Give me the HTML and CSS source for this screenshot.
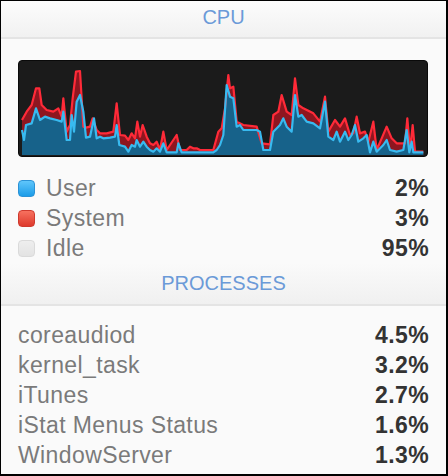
FILE: index.html
```html
<!DOCTYPE html>
<html lang="en">
    <head>
        <meta charset="UTF-8">
        <meta name="viewport" content="width=device-width, initial-scale=1.0">
        <title>CPU</title>
        <link rel="stylesheet" href="styles.css">
    </head>
    <body>
        <div class="panel">
            <div class="section-head head-cpu">CPU</div>
            <div class="section-body">
                <div class="chart">
                    <svg viewBox="57 18 1224 285" preserveAspectRatio="none">
                        <polygon class="sys-area" points="66,195 80,170 95,150 108,100 118,100 125,150 140,165 160,170 175,160 185,185 190,130 200,230 210,210 218,130 228,50 240,48 250,215 258,218 270,215 278,190 290,225 300,235 320,235 340,230 350,145 360,240 375,242 385,255 395,235 405,250 412,200 420,245 428,210 440,245 450,265 460,270 470,260 480,285 490,230 500,285 530,240 540,285 560,285 570,275 580,280 590,280 600,285 640,285 655,230 665,220 675,160 685,60 690,100 700,95 710,200 730,210 770,215 785,265 810,268 820,180 835,170 845,120 860,170 875,180 885,70 895,150 910,160 940,175 960,200 975,125 985,230 1005,195 1020,215 1035,190 1050,240 1060,235 1070,185 1080,235 1095,230 1105,260 1120,200 1130,285 1145,250 1160,215 1175,250 1190,265 1215,265 1222,190 1230,285 1238,210 1245,290 1270,290 1270,300 66,300"/>
                        <polygon class="user-area" points="66,225 72,255 78,210 95,205 108,160 120,195 135,185 150,190 170,195 185,200 190,170 200,255 210,255 215,180 222,230 230,140 240,120 250,170 258,248 270,245 282,190 290,250 300,245 310,250 330,248 345,245 350,210 358,270 375,275 385,290 395,270 405,275 410,255 420,275 430,260 440,275 450,285 460,290 470,280 480,290 490,265 500,292 530,292 535,265 545,292 640,292 650,285 660,270 670,240 680,90 690,125 700,130 710,215 720,210 730,225 770,225 780,230 790,285 810,285 820,230 840,210 850,190 860,215 875,230 885,120 895,185 905,180 920,200 940,205 960,220 975,140 985,245 1000,255 1010,230 1020,260 1035,230 1045,255 1055,240 1065,210 1075,260 1090,250 1100,240 1110,292 1120,260 1130,290 1150,270 1160,255 1170,285 1190,290 1210,285 1220,225 1228,292 1235,260 1240,292 1270,292 1270,300 66,300"/>
                        <polyline class="sys-line" points="66,195 80,170 95,150 108,100 118,100 125,150 140,165 160,170 175,160 185,185 190,130 200,230 210,210 218,130 228,50 240,48 250,215 258,218 270,215 278,190 290,225 300,235 320,235 340,230 350,145 360,240 375,242 385,255 395,235 405,250 412,200 420,245 428,210 440,245 450,265 460,270 470,260 480,285 490,230 500,285 530,240 540,285 560,285 570,275 580,280 590,280 600,285 640,285 655,230 665,220 675,160 685,60 690,100 700,95 710,200 730,210 770,215 785,265 810,268 820,180 835,170 845,120 860,170 875,180 885,70 895,150 910,160 940,175 960,200 975,125 985,230 1005,195 1020,215 1035,190 1050,240 1060,235 1070,185 1080,235 1095,230 1105,260 1120,200 1130,285 1145,250 1160,215 1175,250 1190,265 1215,265 1222,190 1230,285 1238,210 1245,290 1270,290"/>
                        <polyline class="user-line" points="66,225 72,255 78,210 95,205 108,160 120,195 135,185 150,190 170,195 185,200 190,170 200,255 210,255 215,180 222,230 230,140 240,120 250,170 258,248 270,245 282,190 290,250 300,245 310,250 330,248 345,245 350,210 358,270 375,275 385,290 395,270 405,275 410,255 420,275 430,260 440,275 450,285 460,290 470,280 480,290 490,265 500,292 530,292 535,265 545,292 640,292 650,285 660,270 670,240 680,90 690,125 700,130 710,215 720,210 730,225 770,225 780,230 790,285 810,285 820,230 840,210 850,190 860,215 875,230 885,120 895,185 905,180 920,200 940,205 960,220 975,140 985,245 1000,255 1010,230 1020,260 1035,230 1045,255 1055,240 1065,210 1075,260 1090,250 1100,240 1110,292 1120,260 1130,290 1150,270 1160,255 1170,285 1190,290 1210,285 1220,225 1228,292 1235,260 1240,292 1270,292"/>
                    </svg>
                </div>
                <div class="legend">
                    <div class="row">
                        <span class="swatch swatch-user"></span>
                        <span class="label">User</span>
                        <span class="value">2%</span>
                    </div>
                    <div class="row">
                        <span class="swatch swatch-system"></span>
                        <span class="label">System</span>
                        <span class="value">3%</span>
                    </div>
                    <div class="row">
                        <span class="swatch swatch-idle"></span>
                        <span class="label">Idle</span>
                        <span class="value">95%</span>
                    </div>
                </div>
            </div>
            <div class="section-head head-processes">PROCESSES</div>
            <div class="section-body processes">
                <div class="row"><span class="label">coreaudiod</span><span class="value">4.5%</span></div>
                <div class="row"><span class="label">kernel_task</span><span class="value">3.2%</span></div>
                <div class="row"><span class="label">iTunes</span><span class="value">2.7%</span></div>
                <div class="row"><span class="label">iStat Menus Status</span><span class="value">1.6%</span></div>
                <div class="row"><span class="label">WindowServer</span><span class="value">1.3%</span></div>
            </div>
        </div>
    </body>
</html>
```
FILE: styles.css
```css
html, body {
    margin: 0;
    padding: 0;
    width: 100%;
    height: 100%;
    overflow: hidden;
}

body {
    background: #fafafa;
    font-family: "Liberation Sans", Arial, sans-serif;
}

.panel {
    box-sizing: border-box;
    width: 448px;
    height: 476px;
    border: 1px solid #000;
    border-right-width: 2px;
    border-bottom-width: 2px;
    background: #fafafa;
    overflow: hidden;
}

.section-head {
    text-align: center;
    font-size: 20px;
    line-height: 33px;
    color: #6b9ad8;
    background: linear-gradient(#fcfcfc, #f1f1f1);
    border-bottom: 2px solid #e4e4e4;
}

.head-cpu {
    height: 33px;
    padding-bottom: 3px;
}

.head-processes {
    height: 33px;
    padding: 4px 0;
    background: linear-gradient(#fafafa, #f0f0f0);
}

.section-body {
    padding: 0 18px 0 17px;
}

.chart {
    box-sizing: border-box;
    margin-top: 21px;
    width: 410px;
    height: 97px;
    background: #1b1b1b;
    border: 1px solid #0a0a0a;
    border-radius: 4px;
    overflow: hidden;
}

.chart svg {
    display: block;
    width: 100%;
    height: 100%;
}

.sys-area {
    fill: #8e1620;
}

.user-area {
    fill: #17628a;
}

.sys-line,
.user-line {
    fill: none;
    stroke-width: 2.2;
    stroke-linejoin: round;
    vector-effect: non-scaling-stroke;
}

.sys-line {
    stroke: #ff2a38;
}

.user-line {
    stroke: #38baf0;
}

.legend {
    margin-top: 16px;
}

.row {
    display: flex;
    align-items: center;
    height: 30px;
    font-size: 23px;
    line-height: 30px;
    letter-spacing: 0.4px;
}

.label {
    flex: 1;
    color: #7a7a7a;
}

.value {
    font-weight: bold;
    color: #333;
    margin-right: -1px;
}

.swatch {
    box-sizing: border-box;
    width: 17px;
    height: 17px;
    margin-right: 11px;
    border-radius: 4px;
}

.swatch-user {
    background: linear-gradient(#5fc6fb, #1c9ce8);
    border: 1px solid #2b92d6;
}

.swatch-system {
    background: linear-gradient(#f7715f, #de3a2c);
    border: 1px solid #cf3a2e;
}

.swatch-idle {
    background: linear-gradient(#eeeeee, #e3e3e3);
    border: 1px solid #dadada;
}

.processes {
    padding-top: 14px;
}
```
